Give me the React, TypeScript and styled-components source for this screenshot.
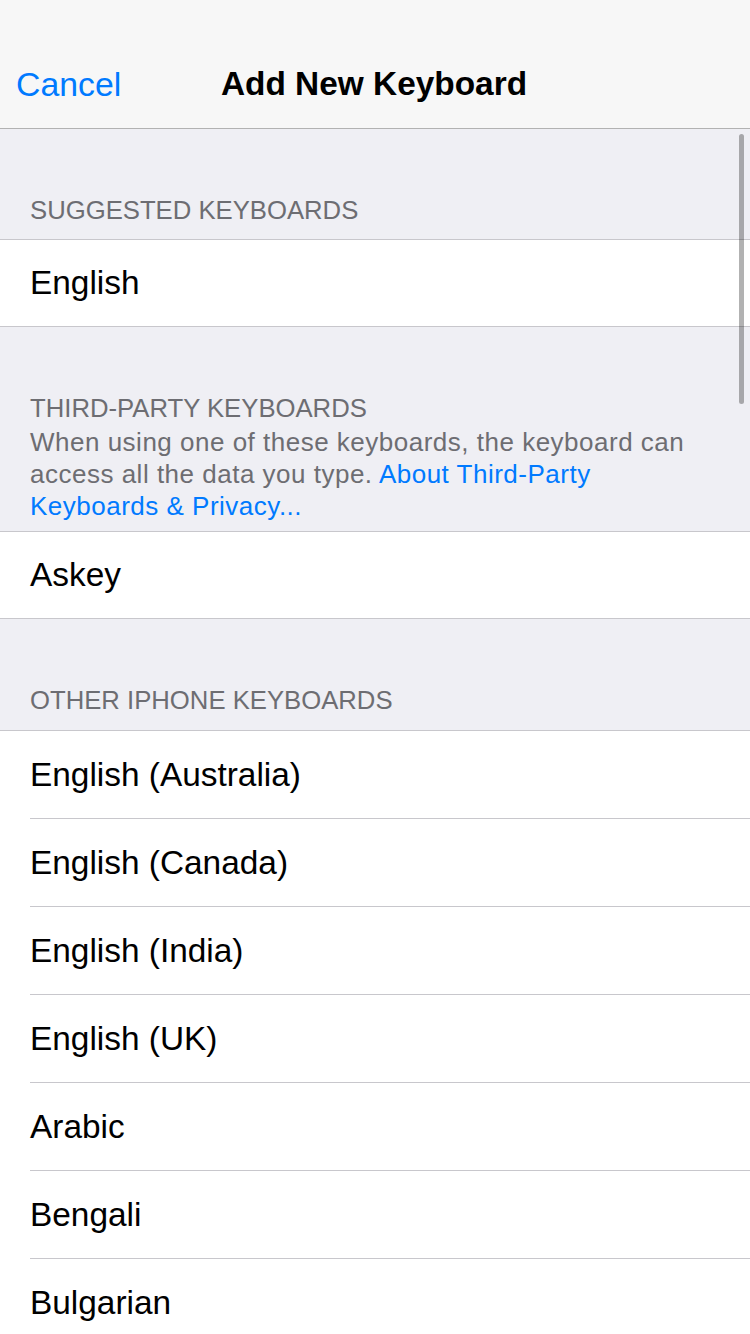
import React, { FC } from 'react';
import styled, { createGlobalStyle } from 'styled-components';

const GlobalStyle = createGlobalStyle`
    html, body {
        margin: 0;
        padding: 0;
        background: #efeff4;
        font-family: "Liberation Sans", Arial, sans-serif;
        -webkit-font-smoothing: antialiased;
    }
    body {
        height: 1334px;
        overflow: hidden;
    }
`;

interface Section {
    title: string;
    items: string[];
    footer?: boolean;
}

const sections: Section[] = [
    { title: 'SUGGESTED KEYBOARDS', items: ['English'] },
    { title: 'THIRD-PARTY KEYBOARDS', items: ['Askey'], footer: true },
    {
        title: 'OTHER IPHONE KEYBOARDS',
        items: [
            'English (Australia)',
            'English (Canada)',
            'English (India)',
            'English (UK)',
            'Arabic',
            'Bengali',
            'Bulgarian',
            'Catalan',
        ],
    },
];

const App: FC = () => {
    return (
        <Screen>
            <GlobalStyle />
            <NavBar>
                <NavInner>
                    <CancelButton>Cancel</CancelButton>
                    <Title>Add New Keyboard</Title>
                </NavInner>
            </NavBar>
            <Content>
                {sections.map((section) => (
                    <Group key={section.title}>
                        <SectionHeader>{section.title}</SectionHeader>
                        {section.footer && (
                            <SectionNote>
                                When using one of these keyboards, the keyboard can access all the data you type.{' '}
                                <NoteLink>About Third-Party Keyboards &amp; Privacy...</NoteLink>
                            </SectionNote>
                        )}
                        <List>
                            {section.items.map((item) => (
                                <Row key={item}>
                                    <RowLabel>{item}</RowLabel>
                                </Row>
                            ))}
                        </List>
                    </Group>
                ))}
                <ScrollIndicator />
            </Content>
        </Screen>
    );
};

const Screen = styled.div`
    width: 750px;
    height: 1334px;
    overflow: hidden;
    background: #efeff4;
`;

const NavBar = styled.header`
    height: 129px;
    padding-top: 40px;
    box-sizing: border-box;
    background: #f7f7f7;
    border-bottom: 1px solid #b2b2b2;
`;

const NavInner = styled.div`
    position: relative;
    height: 88px;
    display: flex;
    align-items: center;
    justify-content: center;
`;

const CancelButton = styled.button`
    position: absolute;
    left: 16px;
    top: 50%;
    transform: translateY(-50%);
    border: none;
    background: none;
    padding: 0;
    color: #007aff;
    font-family: "Liberation Sans", Arial, sans-serif;
    font-size: 33.8px;
`;

const Title = styled.h1`
    margin: 0 0 0 -2px;
    font-size: 33.4px;
    font-weight: 700;
    color: #000;
`;

const Content = styled.main`
    position: relative;
`;

const SectionHeader = styled.div`
    padding: 65px 30px 13px;
    font-size: 25.7px;
    line-height: 32px;
    color: #6d6d72;
`;

const Group = styled.section`
    display: flex;
    flex-direction: column;

    &:last-of-type ${SectionHeader} {
        padding-bottom: 14px;
    }
`;

const SectionNote = styled.p`
    margin: -11px 0 0;
    padding: 0 30px 9px;
    font-size: 26px;
    line-height: 32px;
    color: #6d6d72;
    letter-spacing: 0.5px;
`;

const NoteLink = styled.span`
    color: #007aff;
`;

const List = styled.ul`
    list-style: none;
    margin: 0;
    padding: 0 0 0 30px;
    background: #fff;
    border-top: 1px solid #c8c7cc;
    border-bottom: 1px solid #c8c7cc;
`;

const Row = styled.li`
    height: 87px;
    display: flex;
    align-items: center;
    border-bottom: 1px solid #c8c7cc;

    &:last-child {
        height: 86px;
        border-bottom: none;
    }
`;

const RowLabel = styled.span`
    font-size: 33.4px;
    color: #000;
`;

const ScrollIndicator = styled.div`
    position: absolute;
    top: 5px;
    right: 6px;
    width: 5px;
    height: 270px;
    border-radius: 3px;
    background: rgba(0, 0, 0, 0.3);
`;

export default App;
